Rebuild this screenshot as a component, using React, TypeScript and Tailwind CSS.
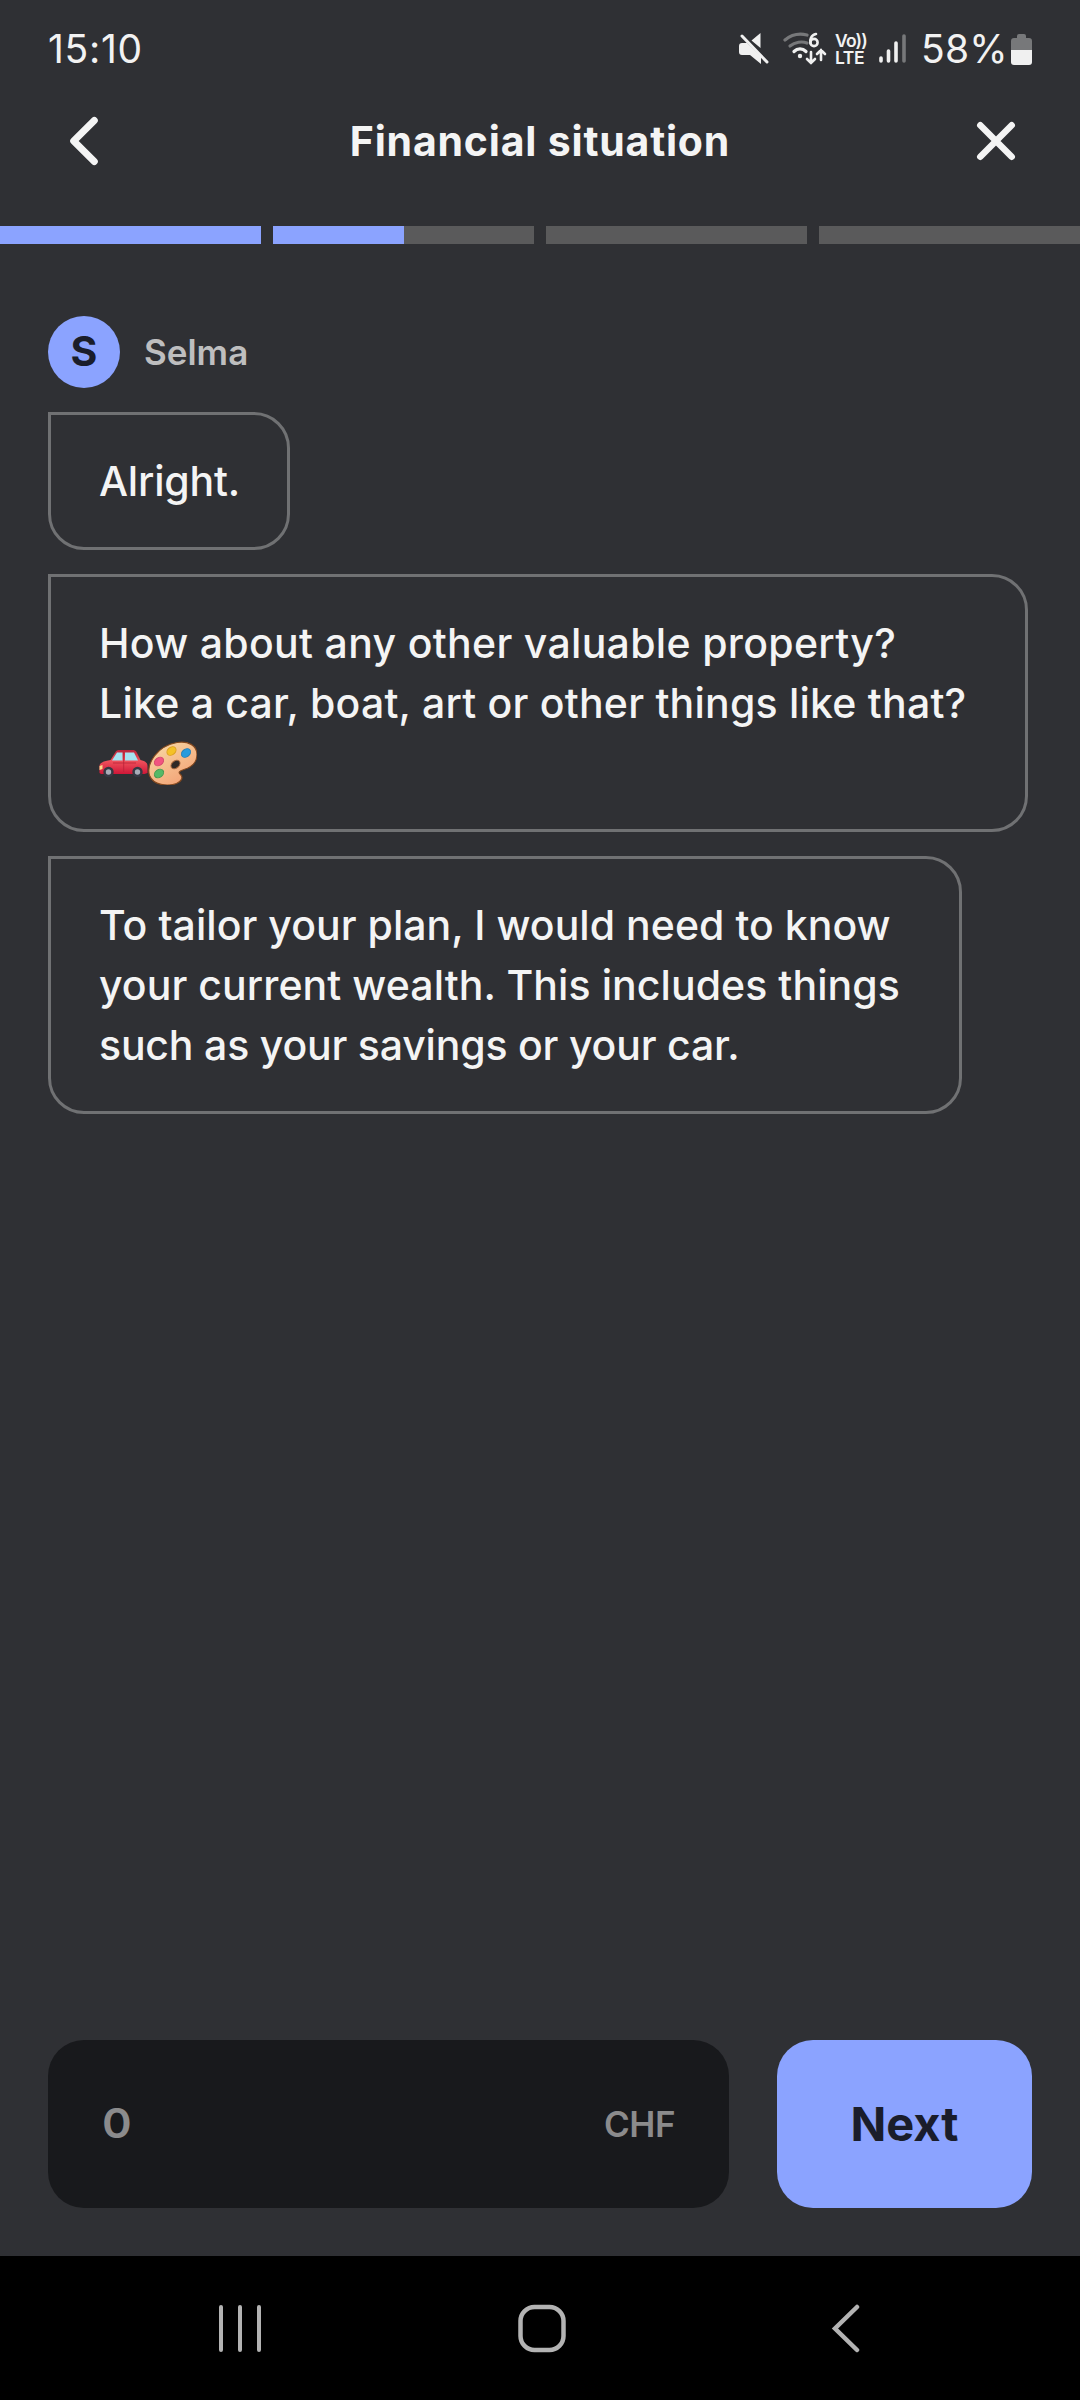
import type { ReactNode } from 'react';

const STEPS = [100, 50, 0, 0];

function StatusBar() {
  return (
    <div className="flex h-24 items-center justify-between px-12 pt-0.5 text-[39px] text-[#f2f2f2]">
      <span className="tracking-[0.7px]">15:10</span>
      <div className="flex items-center">
        {/* Muted speaker */}
        <svg width="30" height="32" viewBox="0 0 30 32" fill="#f0f0f0">
          <path d="M0 13a3 3 0 0 1 3-3h5l14 14v7l-11-9H3a3 3 0 0 1-3-3zM12.500 7.500L21.500 0v15z" />
          <path d="M3 3l25 26" stroke="#f0f0f0" strokeWidth="3" strokeLinecap="round" />
        </svg>
        {/* Wi-Fi 6 */}
        <svg className="ml-3.5" width="44" height="34" viewBox="0 0 44 34" fill="none" strokeLinecap="round">
          <path d="M2 8C8 3 16 1 24 3" stroke="#77787a" strokeWidth="3.200" />
          <path d="M7 14c5-4 12-5 17-3" stroke="#77787a" strokeWidth="3.200" />
          <path d="M11 19.500c3.500-3.500 8.500-3.500 12 0" stroke="#f0f0f0" strokeWidth="3.200" />
          <circle cx="17" cy="24" r="2.200" fill="#f0f0f0" />
          <path d="M33 2c-5 1-6.500 6-5.500 9" stroke="#f0f0f0" strokeWidth="2.600" />
          <circle cx="31" cy="10.500" r="3.600" stroke="#f0f0f0" strokeWidth="2.600" />
          <path d="M28 20v11m-4-4l4 4 4-4M38 28V18m-4 4l4-4 4 4" stroke="#f0f0f0" strokeWidth="2.600" />
        </svg>
        <div className="ml-2 flex w-[32px] flex-col text-[17.5px] font-semibold leading-[17px]">
          <span className="tracking-[-0.8px]">Vo))</span>
          <span className="tracking-[-0.4px]">LTE</span>
        </div>
        <svg className="ml-3" width="28" height="30" viewBox="0 0 28 30" strokeWidth="3.600" strokeLinecap="round">
          <path d="M2 24v3M9.500 17v10M17 9v18" stroke="#f0f0f0" />
          <path d="M25 2v25" stroke="#77787a" />
        </svg>
        <span className="ml-3.5 w-[88px] whitespace-nowrap tracking-[0.2px]">58%</span>
        <svg className="ml-0.5" width="21" height="31" viewBox="0 0 21 31">
          <path d="M6 2a2 2 0 0 1 2-2h5a2 2 0 0 1 2 2v2h3a3 3 0 0 1 3 3v9H0V7a3 3 0 0 1 3-3h3z" fill="#77787a" />
          <path d="M0 16h21v12a3 3 0 0 1-3 3H3a3 3 0 0 1-3-3z" fill="#f0f0f0" />
        </svg>
      </div>
    </div>
  );
}

function Header() {
  return (
    <header className="flex h-[90px] items-center justify-between px-12 text-[#f4f4f4]">
      <button className="flex size-[72px] items-center justify-center">
        <svg width="72" height="72" viewBox="0 0 72 72" fill="none" stroke="currentColor" strokeWidth="7" strokeLinecap="round" strokeLinejoin="round">
          <path d="M46.300 15.500L25.700 36l20.600 20.500" />
        </svg>
      </button>
      <h1 className="pt-0.5 text-[41px] font-bold tracking-[0.8px]">Financial situation</h1>
      <button className="flex size-[72px] items-center justify-center">
        <svg width="72" height="72" viewBox="0 0 72 72" fill="none" stroke="currentColor" strokeWidth="6.500" strokeLinecap="round">
          <path d="M20.300 20.300l31.400 31.400M51.700 20.300L20.300 51.700" />
        </svg>
      </button>
    </header>
  );
}

function Progress() {
  return (
    <div className="mt-10 flex h-[18px] gap-3">
      {STEPS.map((percent, i) => (
        <div key={i} className="flex-1 bg-[#5a5a5b]">
          <div className="h-full bg-[#8ba3ff]" style={{ width: `${percent}%` }} />
        </div>
      ))}
    </div>
  );
}

function Bubble({ width, children }: { width: string; children: ReactNode }) {
  return (
    <div
      className={`${width} flex flex-col whitespace-nowrap rounded-[36px] rounded-tl-none border-[3px] border-[#707173] py-9 pl-12 text-[41px] font-medium leading-[60px] text-[#f4f4f4]`}
    >
      {children}
    </div>
  );
}

function CarEmoji() {
  return (
    <svg width="49" height="44" viewBox="0 0 49 44">
      <defs>
        <linearGradient id="carBody" x1="0" y1="0" x2="0" y2="1">
          <stop offset="0" stopColor="#b8243c" />
          <stop offset="0.450" stopColor="#f0525c" />
          <stop offset="1" stopColor="#cf1738" />
        </linearGradient>
      </defs>
      <path d="M0.500 32v-7c0-3 4-5 11-6l5-8c.8-1.500 2-2 4-2h13c2 0 3 .5 4 2l4 8c5 1 7 3 7 6v7l-3 1H2z" fill="url(#carBody)" />
      <path d="M13 19.500l5-8h5.500v8z" fill="#a5e3f2" />
      <path d="M26 11.500h9l4 8H26z" fill="#a5e3f2" />
      <path d="M24.700 11v20M14 22h23" stroke="#b92338" strokeWidth="0.800" fill="none" />
      <path d="M0.500 25l3-1v4l-3 1z" fill="#ffd889" />
      <circle cx="9.500" cy="31" r="5.200" fill="#353944" />
      <circle cx="38.500" cy="31" r="5.200" fill="#353944" />
      <circle cx="9.500" cy="31" r="2.700" fill="#a8adb8" />
      <circle cx="38.500" cy="31" r="2.700" fill="#a8adb8" />
    </svg>
  );
}

function PaletteEmoji() {
  return (
    <svg width="49" height="44" viewBox="0 0 49 44">
      <defs>
        <linearGradient id="palette" x1="0" y1="0" x2="0.700" y2="1">
          <stop offset="0" stopColor="#f8dda8" />
          <stop offset="1" stopColor="#f3a276" />
        </linearGradient>
      </defs>
      <path
        d="M29 1.500c11-2 20 3 20 12 0 8-6 13-13 15-5 1.500-6 3-3.500 5 3 3 1 7-4 9-9 3-23 2-27-8C-2 23 9 5 29 1.500z"
        fill="url(#palette)"
        stroke="#85491f"
        strokeWidth="1.200"
      />
      <ellipse cx="27.500" cy="23.500" rx="5" ry="3.600" fill="#2f2926" stroke="#a8683f" transform="rotate(-40 27.500 23.500)" />
      <ellipse cx="23.500" cy="10" rx="5" ry="3.800" fill="#f4c126" stroke="#dc9f20" transform="rotate(-40 23.500 10)" />
      <ellipse cx="38" cy="12" rx="5" ry="3.800" fill="#289bdd" stroke="#237fb9" transform="rotate(-40 38 12)" />
      <ellipse cx="11" cy="20.500" rx="5" ry="3.800" fill="#f15480" stroke="#d4476d" transform="rotate(-40 11 20.500)" />
      <ellipse cx="11" cy="32.500" rx="5" ry="3.800" fill="#54b967" stroke="#419951" transform="rotate(-35 11 32.500)" />
    </svg>
  );
}

function Chat() {
  return (
    <main className="flex flex-1 flex-col gap-6 px-12 pt-[72px]">
      <div className="flex items-center gap-6">
        <div className="flex size-[72px] items-center justify-center rounded-full bg-[#8ba3ff] text-[41px] font-bold text-[#1a1d2b]">S</div>
        <span className="text-[35px] font-semibold text-[#bebebf]">Selma</span>
      </div>
      <Bubble width="w-[242px]">
        <span className="tracking-[-0.2px]">Alright.</span>
      </Bubble>
      <Bubble width="w-[980px]">
        <span className="tracking-[0.31px]">How about any other valuable property?</span>
        <span className="tracking-[0.22px]">Like a car, boat, art or other things like that?</span>
        <span className="flex h-[60px] items-center">
          <CarEmoji />
          <PaletteEmoji />
        </span>
      </Bubble>
      <Bubble width="w-[914px]">
        <span className="tracking-[0.04px]">To tailor your plan, I would need to know</span>
        <span className="tracking-[0.07px]">your current wealth. This includes things</span>
        <span className="tracking-[-0.19px]">such as your savings or your car.</span>
      </Bubble>
    </main>
  );
}

function AnswerForm() {
  return (
    <div className="flex h-[216px] gap-12 px-12 pb-12">
      <div className="flex flex-1 items-center justify-between rounded-[36px] bg-[#18191c] px-[54px] font-semibold text-[#8b8b8c]">
        <span className="origin-left scale-x-110 text-[41px]">0</span>
        <span className="text-[35px] tracking-[-0.5px]">CHF</span>
      </div>
      <button className="flex w-[255px] items-center justify-center rounded-[36px] bg-[#8ba3ff] text-[47px] font-bold text-[#1a1d2b]">Next</button>
    </div>
  );
}

function NavBar() {
  return (
    <nav className="flex h-36 items-center bg-black pl-[216px] pt-0.5">
      <svg width="48" height="50" viewBox="0 0 48 50" stroke="#b3b3b3" strokeWidth="4" strokeLinecap="round">
        <path d="M5 3v43M24 3v43M43 3v43" />
      </svg>
      <svg className="ml-[253px]" width="50" height="50" viewBox="0 0 50 50" fill="none" stroke="#b3b3b3" strokeWidth="4.500">
        <rect x="3.500" y="3" width="43" height="43" rx="14" />
      </svg>
      <svg className="ml-[264px]" width="32" height="50" viewBox="0 0 32 50" fill="none" stroke="#b3b3b3" strokeWidth="4.500" strokeLinecap="round">
        <path d="M26 3L4 24.500l22 21.500" />
      </svg>
    </nav>
  );
}

export default function App() {
  return (
    <div className="flex h-[2400px] w-[1080px] flex-col bg-[#2f3034] font-['Inter','Noto_Sans',sans-serif]">
      <StatusBar />
      <Header />
      <Progress />
      <Chat />
      <AnswerForm />
      <NavBar />
    </div>
  );
}
